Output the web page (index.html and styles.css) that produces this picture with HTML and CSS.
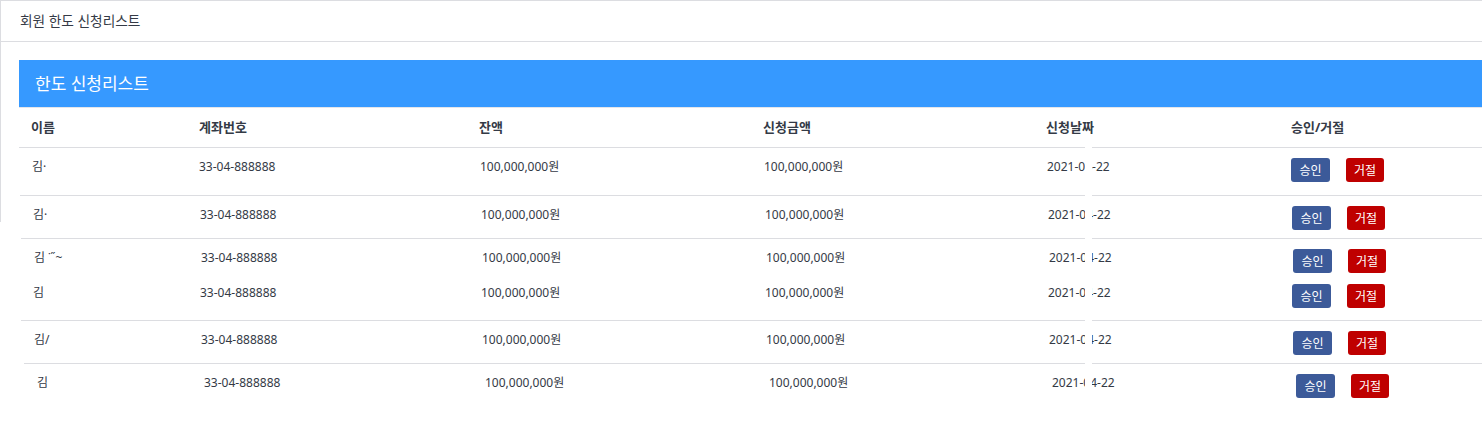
FILE: index.html
```html
<!DOCTYPE html>
<html lang="ko">
<head>
<meta charset="utf-8">
<title>회원 한도 신청리스트</title>
<link rel="stylesheet" href="styles.css">
</head>
<body>
<div class="card">
  <div class="card-header">회원 한도 신청리스트</div>
  <div class="card-body">
    <div class="panel-title">한도 신청리스트</div>
    <div class="row head">
      <div>이름</div><div>계좌번호</div><div>잔액</div><div>신청금액</div><div>신청날짜</div><div>승인/거절</div>
    </div>
    <div class="row r1">
      <div>김·</div><div>33-04-888888</div><div>100,000,000원</div><div>100,000,000원</div><div>2021-04-22</div>
      <div class="actions"><button class="btn ok">승인</button><button class="btn no">거절</button></div>
    </div>
    <div class="row r2">
      <div>김·</div><div>33-04-888888</div><div>100,000,000원</div><div>100,000,000원</div><div>2021-04-22</div>
      <div class="actions"><button class="btn ok">승인</button><button class="btn no">거절</button></div>
    </div>
    <div class="row r3">
      <div>김 ˙˝~</div><div>33-04-888888</div><div>100,000,000원</div><div>100,000,000원</div><div>2021-04-22</div>
      <div class="actions"><button class="btn ok">승인</button><button class="btn no">거절</button></div>
    </div>
    <div class="row r4">
      <div>김</div><div>33-04-888888</div><div>100,000,000원</div><div>100,000,000원</div><div>2021-04-22</div>
      <div class="actions"><button class="btn ok">승인</button><button class="btn no">거절</button></div>
    </div>
    <div class="row r5">
      <div>김/</div><div>33-04-888888</div><div>100,000,000원</div><div>100,000,000원</div><div>2021-04-22</div>
      <div class="actions"><button class="btn ok">승인</button><button class="btn no">거절</button></div>
    </div>
    <div class="row r6">
      <div>김</div><div>33-04-888888</div><div>100,000,000원</div><div>100,000,000원</div><div>2021-04-22</div>
      <div class="actions"><button class="btn ok">승인</button><button class="btn no">거절</button></div>
    </div>
  </div>
</div>
<div class="mask"></div>
</body>
</html>
```
FILE: styles.css
```css
html, body {
  margin: 0;
  padding: 0;
  background: #ffffff;
  overflow: hidden;
}
body {
  position: relative;
  width: 1482px;
  height: 440px;
  font-family: "Noto Sans", "Noto Sans CJK KR", sans-serif;
  font-size: 12px;
  color: #343a46;
}
.card {
  border-top: 1px solid #dcdde1;
  border-left: 1px solid #dcdde1;
  height: 221px;
}
.card-header {
  height: 40px;
  line-height: 40px;
  padding-left: 19px;
  font-size: 13.7px;
  border-bottom: 1px solid #dcdde1;
}
.card-body {
  padding: 18px 0 0 18px;
}
.panel-title {
  height: 47px;
  line-height: 47px;
  background: #3699ff;
  color: #ffffff;
  font-size: 17px;
  padding-left: 16px;
}
.row {
  display: grid;
  grid-template-columns: 167px 281px 284px 283px 244px 1fr;
  align-items: start;
  padding: 10px 0 0 13px;
  box-sizing: border-box;
  border-top: 1px solid #dcdde1;
  line-height: 18px;
  white-space: nowrap;
}
.row.head {
  border-top: 1px solid #e4e5ea;
  height: 40px;
  padding-top: 10px;
  padding-left: 12px;
  font-weight: 700;
  font-size: 13px;
}
.row.head div:nth-child(2) { margin-left: 1px; }
.row.head div:last-child { margin-left: 1px; }
.r1 { height: 48px; }
.r2 { height: 43px; margin-left: 1px; }
.r3 { height: 36px; margin-left: 2px; }
.r4 { height: 46px; margin-left: 1px; border-top-color: transparent; padding-top: 9px; }
.r5 { height: 43px; margin-left: 2px; }
.r6 { height: 48px; margin-left: 5px; }
.actions {
  display: flex;
  gap: 16px;
}
.btn {
  border: 0;
  border-radius: 3px;
  height: 24px;
  padding: 0;
  font-family: inherit;
  font-size: 12px;
  color: #ffffff;
  cursor: pointer;
}
.btn.ok { width: 39px; background: #3c5a99; }
.btn.no { width: 38px; background: #bf0000; }
.mask {
  position: absolute;
  left: 1085px;
  top: 147px;
  width: 7px;
  height: 250px;
  background: #ffffff;
}
```
